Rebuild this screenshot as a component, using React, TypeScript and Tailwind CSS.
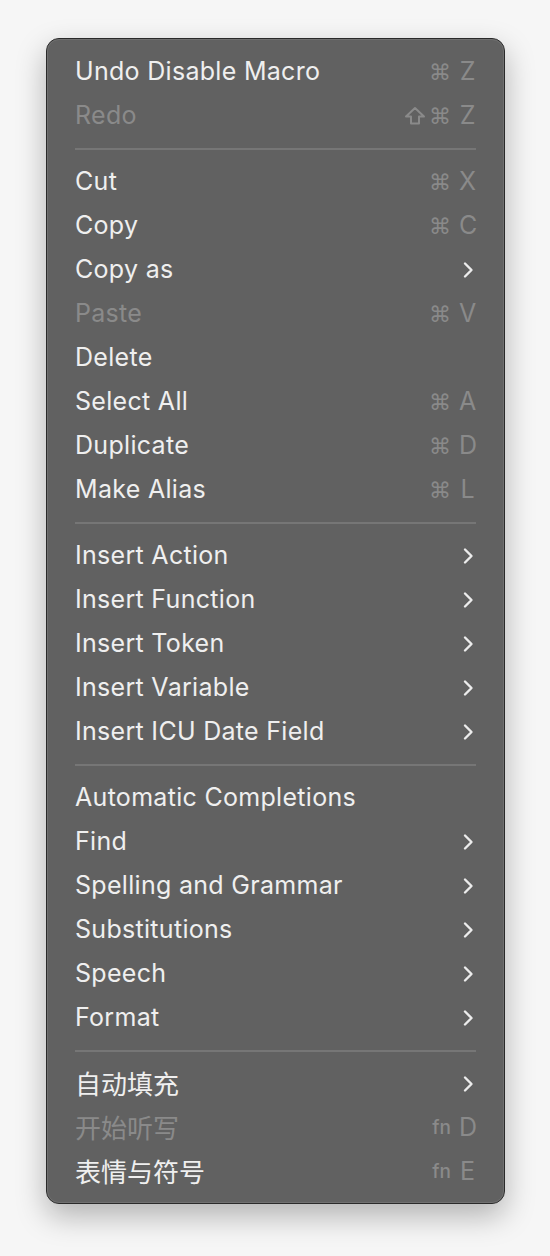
import React from "react";

type Item =
  | { sep: true }
  | {
      sep?: false;
      label: string;
      disabled?: boolean;
      sub?: boolean;
      mods?: string;
      key?: string;
      fn?: boolean;
      cjk?: boolean;
    };

const items: Item[] = [
  { label: "Undo Disable Macro", mods: "⌘", key: "Z" },
  { label: "Redo", disabled: true, mods: "⇧⌘", key: "Z" },
  { sep: true },
  { label: "Cut", mods: "⌘", key: "X" },
  { label: "Copy", mods: "⌘", key: "C" },
  { label: "Copy as", sub: true },
  { label: "Paste", disabled: true, mods: "⌘", key: "V" },
  { label: "Delete" },
  { label: "Select All", mods: "⌘", key: "A" },
  { label: "Duplicate", mods: "⌘", key: "D" },
  { label: "Make Alias", mods: "⌘", key: "L" },
  { sep: true },
  { label: "Insert Action", sub: true },
  { label: "Insert Function", sub: true },
  { label: "Insert Token", sub: true },
  { label: "Insert Variable", sub: true },
  { label: "Insert ICU Date Field", sub: true },
  { sep: true },
  { label: "Automatic Completions" },
  { label: "Find", sub: true },
  { label: "Spelling and Grammar", sub: true },
  { label: "Substitutions", sub: true },
  { label: "Speech", sub: true },
  { label: "Format", sub: true },
  { sep: true },
  { label: "自动填充", sub: true, cjk: true },
  { label: "开始听写", disabled: true, fn: true, key: "D", cjk: true },
  { label: "表情与符号", fn: true, key: "E", cjk: true },
];

function Chevron() {
  return (
    <svg width="12" height="18" viewBox="0 0 12 18" className="mr-[2px]">
      <path
        d="M3 2.5 L9.5 9 L3 15.5"
        fill="none"
        stroke="#ececec"
        strokeWidth="2.4"
        strokeLinecap="round"
        strokeLinejoin="round"
      />
    </svg>
  );
}

function ShiftGlyph() {
  return (
    <svg width="22" height="20" viewBox="0 0 22 20" className="mr-[3px]">
      <path
        d="M11 2 L20 10.5 L15 10.5 L15 17.5 L7 17.5 L7 10.5 L2 10.5 Z"
        fill="none"
        stroke="#8a8a8a"
        strokeWidth="2"
        strokeLinejoin="round"
      />
    </svg>
  );
}

export default function App() {
  return (
    <div className="w-[550px] h-[1256px] bg-[#f6f6f6] relative" style={{ fontFamily: "Inter, 'Noto Sans CJK SC', sans-serif" }}>
      <div className="absolute left-[46px] top-[38px] w-[459px] rounded-[13px] border border-[#2a2a2a] bg-[#616161] shadow-[0_12px_30px_rgba(0,0,0,0.28)]">
        <div className="rounded-[12px] border border-[#7a7a7a]/60 pt-[10px] pb-[8px] pl-[27px] pr-[27px]">
          {items.map((it, i) =>
            it.sep ? (
              <div key={i} className="h-[22px] flex items-center">
                <div className="h-[2px] w-full bg-[#767676]" />
              </div>
            ) : (
              <div key={i} className="h-[44px] flex items-center justify-between">
                <span
                  className={
                    (it.cjk ? "text-[26px] " : "text-[25px] tracking-[0.3px] ") +
                    (it.disabled ? "text-[#8a8a8a]" : "text-[#efefef]")
                  }
                >
                  {it.label}
                </span>
                {it.sub ? (
                  <Chevron />
                ) : it.key ? (
                  <span className="flex items-center text-[#8a8a8a]">
                    {it.fn ? (
                      <span className="text-[19px] font-medium mr-[8px]">fn</span>
                    ) : null}
                    {it.mods === "⇧⌘" ? <ShiftGlyph /> : null}
                    {it.mods ? (
                      <span className="text-[22px] mr-[8px]" style={{ fontFamily: "'DejaVu Sans', sans-serif" }}>⌘</span>
                    ) : null}
                    <span className="text-[25px] w-[17px] text-center">{it.key}</span>
                  </span>
                ) : null}
              </div>
            )
          )}
        </div>
      </div>
    </div>
  );
}
